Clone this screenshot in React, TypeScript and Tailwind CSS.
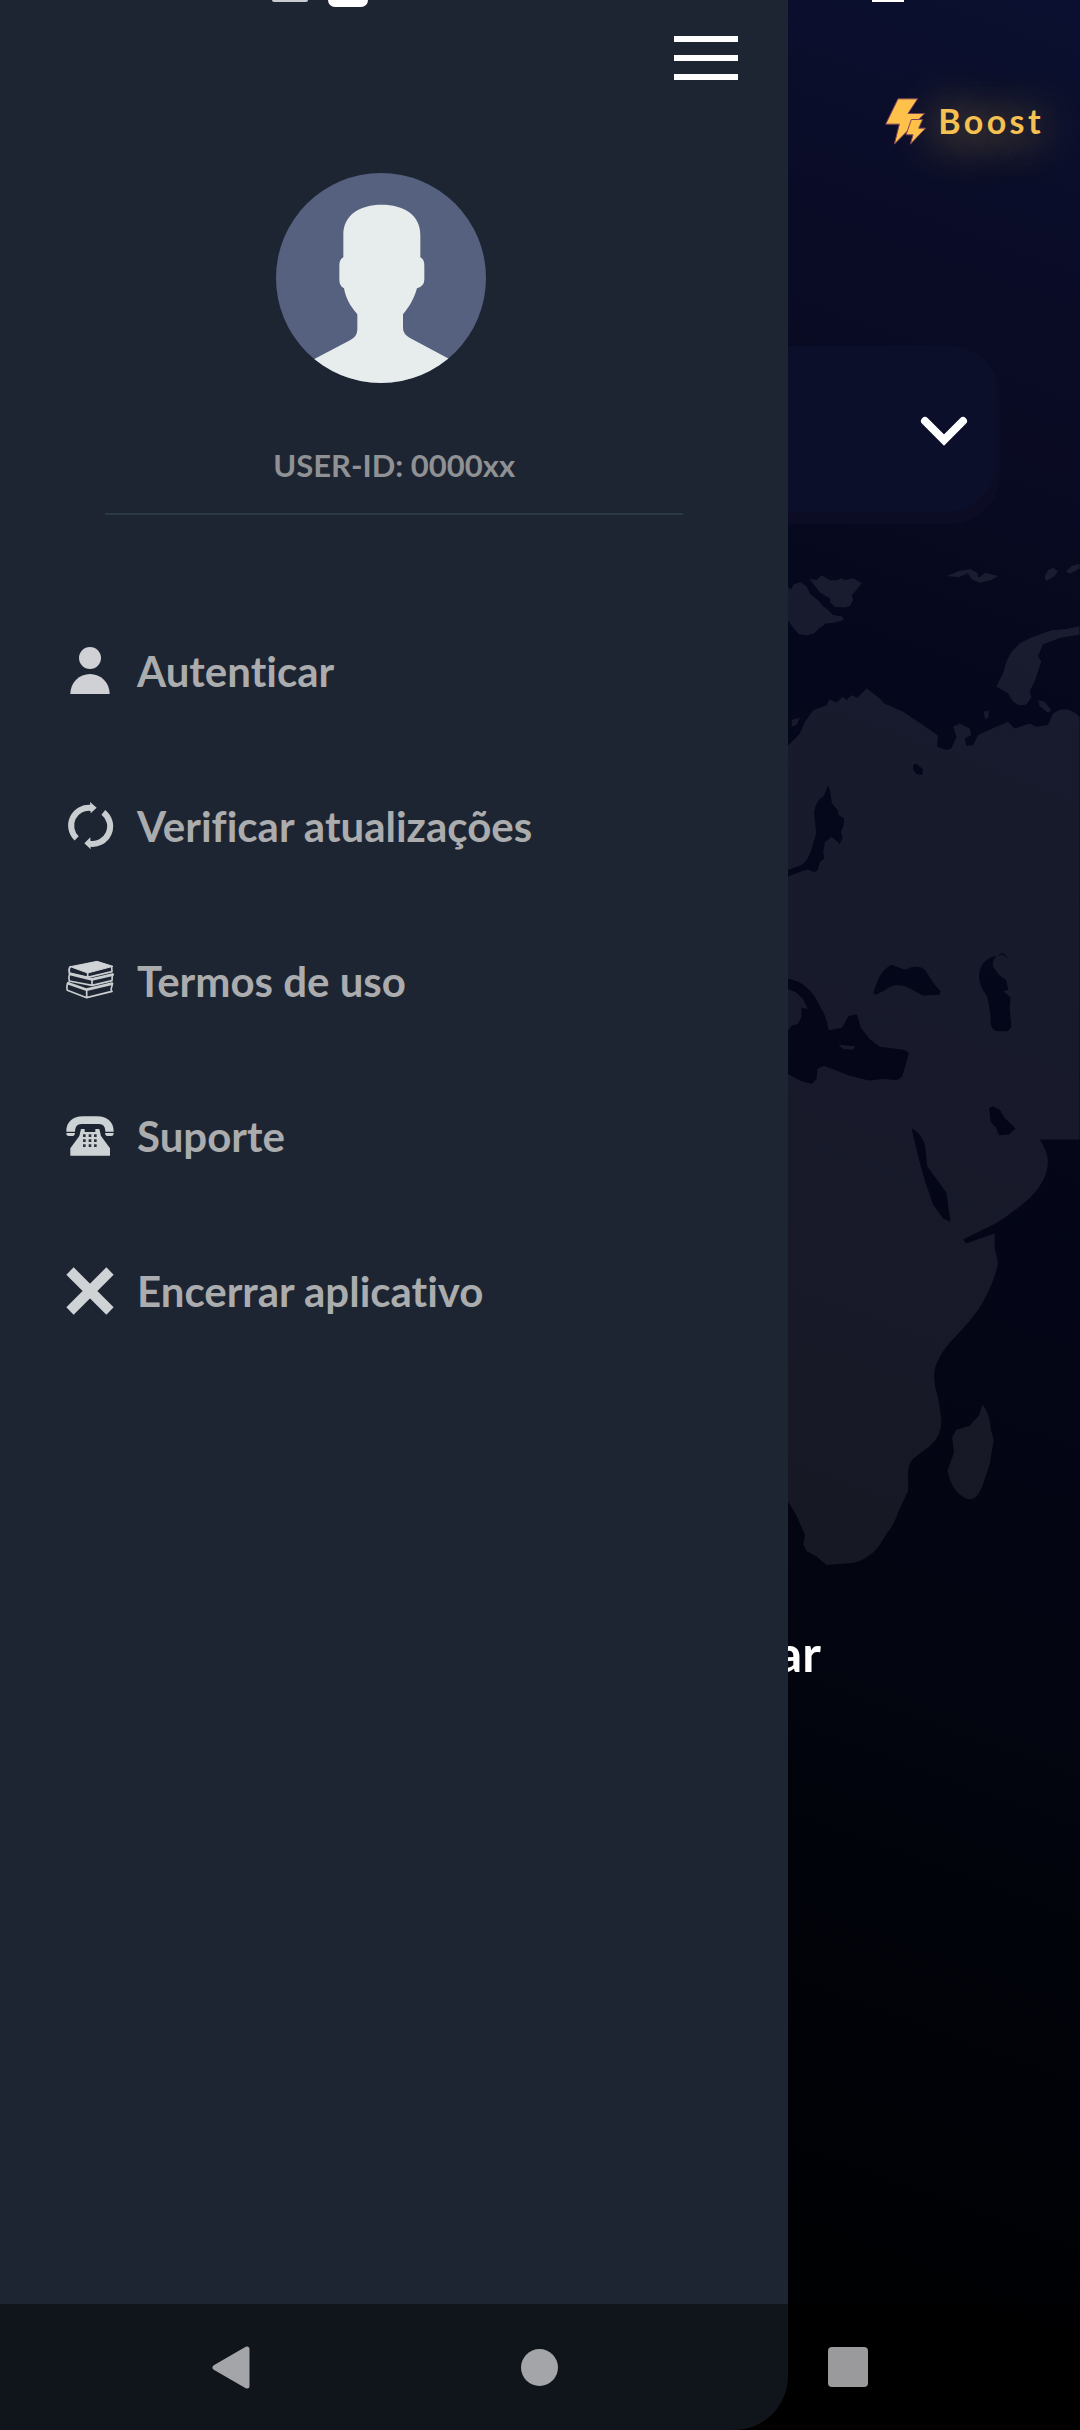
import type { ReactNode } from "react";

const iconClass = "w-12 h-12 shrink-0";

const UserIcon = () => (
  <svg viewBox="0 0 144 144" className={iconClass} fill="#cfd1d4">
    <circle cx="72" cy="33" r="33" />
    <path d="M13 141a59 60 0 0 1 118 0z" />
  </svg>
);

const RefreshIcon = () => (
  <svg viewBox="0 0 144 144" className={iconClass} fill="#c9cdcf">
    <g fill="none" stroke="#c9cdcf" strokeWidth="18">
      <path d="M32 109A53 53 0 0 1 76 18" />
      <path d="M112 31A53 53 0 0 1 70 125" />
    </g>
    <path d="M72 0l20 17-18 17zM74 142l-19-18 18-18z" />
  </svg>
);

const BooksIcon = () => (
  <svg viewBox="0 0 144 144" className={iconClass}>
    <path
      d="M13 29L93 13l48 15-76 20z"
      fill="#d0d4d6"
      stroke="#d0d4d6"
      strokeWidth="3"
      strokeLinejoin="round"
    />
    <g
      fill="none"
      stroke="#c9cdd0"
      strokeWidth="5"
      strokeLinejoin="round"
      strokeLinecap="round"
    >
      <path d="M13 29q-6 6-3 19l55 13 73-17-1-14M65 48v13" />
      <path d="M14 50q-8 5-4 22l68 13 60-14 1-19M78 67v18" />
      <path d="M8 76q-8 7-4 24l58 22 76-19-3-5 4-16M62 98v24" />
      <path d="M12 51l66 16 62-14M6 79l56 19 76-18" strokeWidth="8" />
    </g>
  </svg>
);

const PhoneIcon = () => (
  <svg viewBox="0 0 144 144" className={iconClass} fill="#cdd2d4">
    <path d="M1 59C0 30 22 13 50 13h44c28 0 50 17 49 46h-25c0-14-5-23-20-23H47c-15 0-19 9-20 23z" />
    <path d="M1 63h26q-1 9-7 9H8q-7 0-7-9zM117 63h26q0 9-7 9h-12q-6 0-7-9z" />
    <path d="M13 131v-22l27-37 5-21h11v9h32v-9h12l5 21 27 37v22z" />
    <g fill="#2b323d">
      <path d="M51 67h8v8h-8zM68 67h8v8h-8zM84 67h8v8h-8z" />
      <path d="M51 82h8v8h-8zM68 82h8v8h-8zM84 82h8v8h-8z" />
      <path d="M51 97h8v8h-8zM68 97h8v8h-8zM84 97h8v8h-8z" />
    </g>
  </svg>
);

const CloseIcon = () => (
  <svg viewBox="0 0 144 144" className={iconClass}>
    <path
      d="M12 12l120 120M132 12L12 132"
      stroke="#d0d3d6"
      strokeWidth="31"
    />
  </svg>
);

const Avatar = () => (
  <svg viewBox="0 0 630 630" className="w-[210px] h-[210px] mr-[26px]">
    <clipPath id="avatar">
      <circle cx="315" cy="315" r="315" />
    </clipPath>
    <g clipPath="url(#avatar)">
      <rect width="630" height="630" fill="#56607f" />
      <path
        d="M317 95c-65 0-115 30-115 90v68q-12 6-12 25v42q0 18 14 26c5 28 17 52 40 78v45q0 22-22 33L115 558 60 640h510l-50-82-118-63q-21-12-21-30v-41c22-26 34-50 42-78q22-8 22-26v-42q0-19-12-25v-68c0-60-50-90-116-90z"
        fill="#e7ecec"
      />
    </g>
  </svg>
);

const BoltIcon = () => (
  <svg
    viewBox="0 0 123 140"
    className="w-[41px] h-[47px]"
    fill="#fec14b"
    stroke="#7d3f5c"
    strokeWidth="3"
  >
    <path d="M39 2h59L69 46h50L28 138l15-60H2z" />
    <path d="M79 64h34l-12 26h21l-46 48 8-28H63z" />
  </svg>
);

const WorldMap = () => (
  <svg
    viewBox="54 690 876 3030"
    className="w-[27%] self-end"
    fill="#ffffff"
    fillOpacity="0.08"
    fillRule="evenodd"
  >
    {/* greenland tip and the arctic islands */}
    <path d="M54 765l10 8 5-15 22-8 18 12 12 25 20 15 18 20 15 12 15 15 28 5 5 10-25 8-30 3-20 15-15 15-20 5-25-3-15-17-18-25z" />
    <path d="M118 740l22 5 15-15 25 15h20l15-6 10 6 25-6 25 15-20 25-10 10 5 15-10 18-15 5-30-2-15-15v-10l-30-18-15-20z" />
    <path d="M532 732l35-15 35-5 20 10 5 15 20-15 38 10-20 12-35 8-25-10-10-18-28 12z" />
    <path d="M825 735l10-20 15-8 15 10-10 15-25 15zM890 718l15-15 25-8v15l-30 15z" />
    {/* novaya zemlya */}
    <path d="M930 883v25l-60 10-50 20-15 35 10 15-20 60-15 30 5 20-15 20-20 3-20-12-15-25-35-20 20-40 10-35 15-28 25-27 35-17 60-22 45-4z" />
    <path d="M805 1105l20 5 20 25-10 8-25-20zM642 1140l15-5v20l-10 10zM65 1165l25-8-10 22-14 5z" />
    {/* eurasia and africa, with the inner seas cut out */}
    <path
      d="M54 1242l36-37 15-35 25-35 40-15 8-18 22 10 18-17 12 10 15-15 17 8 28-28 40 30 12 14 58 26 37 25 38 25 30 22-3 33 28 10 15-5 15-35-10-30 20-10 30 15 5 20-20 10 5 22 20-2 15-30 55-25 35-15 20 20 45-15 20 10 35-5 15-35q40-30 80 10V2425H810
      Q835 2460 835 2495Q832 2550 780 2601Q730 2645 680 2676L580 2725L590 2737L630 2722L675 2707L675 2751L685 2795Q675 2850 640 2912Q620 2950 560 3014Q493 3082 493 3136Q493 3165 505 3200L515 3266Q516 3315 480 3346L430 3384Q415 3400 415 3426V3480L385 3544Q370 3590 350 3609Q322 3660 300 3673Q275 3693 245 3697L170 3703L140 3678L110 3662L100 3641L105 3614L80 3555L54 3512z
      M430 1300l10-5 20 18-3 17-16-2-11-14z
      M175 1360l6 20 5 35 17 20 3 15 17 10-3 25-7 15 5 20-10 18-8-10-15-12-20 15-5 30 3 20-13 10-7 25-10 5-20-7-20 6-39 15v-20l40-15q20-12 30-45l15-50-7-60q5-40 28-50z
      M310 1985l10-30q15-40 45-55l40 15q40-18 60 0l30 45 18 20-5 10-50 2-40-22q-40-20-70 5l-30 15z
      M720 1885l-20-15q-70 5-72 65 0 30 25 60l10 60q-5 45 25 45h25l12-12-5-60 3-30-22-18 15-5-7-30-22-15-17-25q-5-30 30-40z
      M54 1942q65 10 97 85 20 30 25 70l40-8 20-35 25-5 12 40 27 35 30 22 35 5 40 5 12 10-10 35-10 35-15 10-45-3-40 5-60-15-55-22-20-8-20 10-2 30-15 15-35-10-36-20v-130l10-15 20-5 10-20v-30l20 5-15-30-20-20-25-10z
      M205 2140l50 5-5 10-30-2z
      M658 2330l10-5 22 10 15 25 33 32-20 18-30 2-10-25-15-15z
      M425 2390Q460 2410 467 2450L472 2505L530 2585L535 2625L542 2672L520 2662L490 2620L465 2548L445 2475z"
    />
    {/* madagascar */}
    <path d="M638 3221Q660 3245 664 3300L672 3328L660 3400L640 3460Q622 3512 595 3505Q548 3490 533 3420L553 3365L547 3320L560 3297L600 3285L628 3253z" />
  </svg>
);

interface MenuItem {
  label: string;
  icon: ReactNode;
}

const menuItems: MenuItem[] = [
  { label: "Autenticar", icon: <UserIcon /> },
  { label: "Verificar atualizações", icon: <RefreshIcon /> },
  { label: "Termos de uso", icon: <BooksIcon /> },
  { label: "Suporte", icon: <PhoneIcon /> },
  { label: "Encerrar aplicativo", icon: <CloseIcon /> },
];

const Home = () => (
  <main className="flex flex-col">
    <header className="flex justify-end pt-24 pr-9">
      <button className="flex items-center gap-3">
        <BoltIcon />
        <span className="text-[34px] leading-[50px] font-bold tracking-widest text-[#f4c152] [text-shadow:0_4px_48px_#f4c152]">
          Boost
        </span>
      </button>
    </header>
    <button
      aria-label="Servidor"
      className="flex items-center justify-end mx-20 mt-50 h-[178px] pr-8 pb-2 rounded-[50px] bg-[#0b0f29] shadow-[inset_-4px_-12px_0_#0c0d24]"
    >
      <svg viewBox="0 0 48 30" className="w-12" fill="none">
        <path
          d="M5 5l19 19L43 5"
          stroke="#ffffff"
          strokeWidth="8"
          strokeLinecap="round"
        />
      </svg>
    </button>
    <div className="flex flex-col mt-[38px]">
      <WorldMap />
    </div>
    <p className="self-end mt-[54px] pr-[24%] text-[50px] leading-[56px] font-bold text-white">
      ar
    </p>
  </main>
);

const Drawer = () => (
  <aside className="absolute inset-y-0 left-0 w-[73%] flex flex-col bg-[#1e2532] rounded-br-[54px]">
    <button
      aria-label="Menu"
      className="self-end mt-9 mr-[50px] w-16 flex flex-col gap-[13px]"
    >
      <span className="h-[6px] w-full bg-white" />
      <span className="h-[6px] w-full bg-white" />
      <span className="h-[6px] w-full bg-white" />
    </button>
    <div className="flex flex-col items-center mx-[105px] mt-[93px] border-b-2 border-[#283a46]">
      <Avatar />
      <p className="mt-[62px] mb-7 text-[31px] leading-10 font-bold text-[#8f9194]">
        USER-ID: 0000xx
      </p>
    </div>
    <nav className="flex flex-col mt-[78px]">
      {menuItems.map((item) => (
        <button
          key={item.label}
          className="flex items-center gap-[23px] h-[155px] pl-[66px] text-[42px] leading-[48px] font-bold text-[#abacae] [font-variant-ligatures:none]"
        >
          {item.icon}
          {item.label}
        </button>
      ))}
    </nav>
  </aside>
);

// bottom edge of the phone's status icons
const StatusIcons = () => (
  <div className="absolute inset-x-0 top-0 flex items-start px-[25%]">
    <div className="h-[2px] w-9 ml-[2px] rounded-b-sm bg-[#c9cbd0]" />
    <div className="h-[7px] w-10 ml-5 rounded-b-lg bg-white" />
    <div className="absolute right-44 h-[2px] w-8 bg-white" />
  </div>
);

const SystemBar = () => (
  <div className="absolute inset-x-0 bottom-0 h-[126px] px-[212px] flex items-center justify-between bg-black/45">
    <button aria-label="Voltar">
      <svg viewBox="0 0 38 43" className="w-[38px]" fill="#a3a5a8">
        <path
          d="M35 3v37L3 21.500z"
          stroke="#a3a5a8"
          strokeWidth="5"
          strokeLinejoin="round"
        />
      </svg>
    </button>
    <button aria-label="Início" className="size-[37px] rounded-full bg-[#a3a5a8]" />
    <button aria-label="Recentes" className="size-10 rounded-sm bg-[#9a9a9c]" />
  </div>
);

export default function App() {
  return (
    <div className="relative min-h-screen overflow-hidden font-['Lato',sans-serif] bg-[linear-gradient(200deg,#0b1030_0%,#0a0b24_14%,#05081c_26%,#040616_50%,#01030a_70%,#000000_90%)]">
      <Home />
      <Drawer />
      <StatusIcons />
      <SystemBar />
    </div>
  );
}
